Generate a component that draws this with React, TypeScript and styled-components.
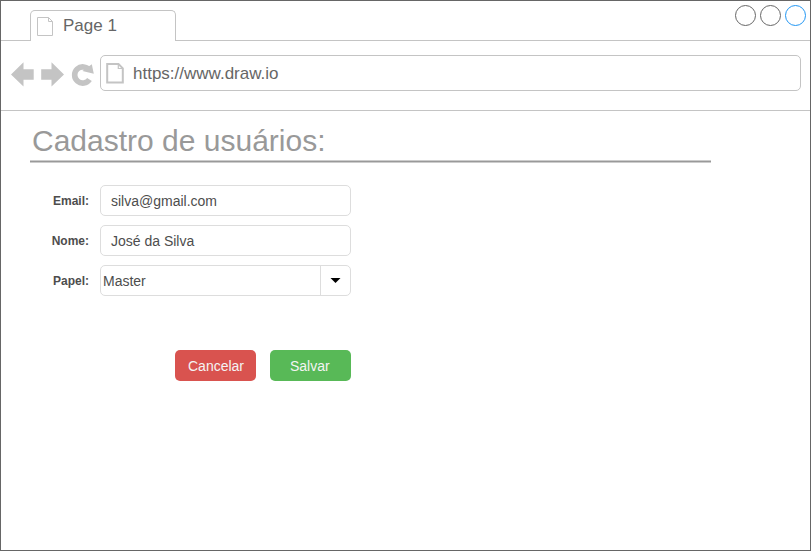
import React from "react";
import styled, { createGlobalStyle } from "styled-components";

const GlobalStyle = createGlobalStyle`
  *, *::before, *::after { box-sizing: border-box; }
  body {
    margin: 0;
    background: #fff;
    font-family: "Liberation Sans", Arial, Helvetica, sans-serif;
  }
`;

const BrowserWindow = styled.div`
  width: 811px;
  height: 551px;
  border: 1px solid #666;
  background: #fff;
  overflow: hidden;
`;

const TabStrip = styled.header`
  display: grid;
  grid-template-columns: 30px 146px 1fr;
  height: 40px;
  margin: 0 -1px;
`;

const StripFill = styled.div`
  display: flex;
  justify-content: flex-end;
  align-items: flex-start;
  gap: 4px;
  padding: 4px 5px 0 0;
  border-bottom: 1px solid #c4c4c4;
`;

const Tab = styled.div`
  display: flex;
  align-items: center;
  gap: 9px;
  margin-top: 9px;
  padding: 0 0 1px 6px;
  border: 1px solid #c4c4c4;
  border-bottom: 0;
  border-radius: 5px 5px 0 0;
  color: #666;
  font-size: 17px;
  line-height: 20px;
`;

const Drawing = styled.svg`
  display: block;
  flex: none;
`;

const TabIcon = styled(Drawing)`
  margin-top: 2px;
`;

const Toolbar = styled.nav`
  display: flex;
  align-items: flex-start;
  height: 70px;
  margin: 0 -1px;
  padding: 14px 10px 0 10px;
  border-bottom: 1px solid #c4c4c4;
`;

const NavIcons = styled.div`
  width: 90px;
  padding-top: 5px;
`;

const AddressBar = styled.div`
  display: flex;
  align-items: center;
  gap: 8px;
  flex: 1;
  height: 36px;
  padding-left: 5px;
  border: 1px solid #c4c4c4;
  border-radius: 5px;
`;

const Address = styled.span`
  padding-top: 2px;
  color: #666;
  font-size: 17px;
  line-height: 20px;
`;

const Content = styled.main`
  padding: 10px 0 0 29px;
`;

const Title = styled.h1`
  width: 681px;
  height: 39px;
  margin: 0;
  padding-left: 2px;
  color: #999;
  font-size: 30px;
  font-weight: 400;
  line-height: 40px;
`;

const Rule = styled.div`
  width: 681px;
  height: 3px;
  background: #999;
  border: solid #ccc;
  border-width: 1px 0;
`;

const Form = styled.form`
  display: grid;
  row-gap: 9px;
  margin-top: 22px;
`;

const FieldRow = styled.label`
  display: grid;
  grid-template-columns: 59px 251px;
  column-gap: 11px;
  align-items: center;
  height: 31px;
`;

const Caption = styled.span`
  color: #4d4d4d;
  font-size: 12px;
  font-weight: 700;
  text-align: right;
`;

const Field = styled.span<{ $inset: number }>`
  display: flex;
  justify-content: space-between;
  align-items: center;
  height: 31px;
  padding-left: ${(p) => p.$inset}px;
  border: 1px solid #ddd;
  border-radius: 5px;
  color: #4d4d4d;
  font-size: 14px;
  line-height: 16px;
`;

const DropButton = styled.span`
  display: flex;
  align-items: center;
  justify-content: center;
  width: 30px;
  height: 29px;
  border-left: 1px solid #ddd;
`;

const Actions = styled.div`
  display: flex;
  gap: 14px;
  margin: 45px 0 0 145px;
`;

const Button = styled.button<{ $color: string; $inset: number }>`
  width: 81px;
  height: 31px;
  padding: 2px 0 0 ${(p) => p.$inset}px;
  border: 0;
  border-radius: 5px;
  background: ${(p) => p.$color};
  color: #f4f4f4;
  text-align: left;
  font: 14px/29px "Liberation Sans", Arial, sans-serif;
`;

const WindowDot = ({ color }: { color: string }) => (
  <Drawing width="21" height="21" viewBox="0 0 21 21">
    <circle cx="10.5" cy="10.5" r="10" fill="#fff" stroke={color} />
  </Drawing>
);

const TabPageIcon = () => (
  <TabIcon width="17" height="19" viewBox="0 0 17 19" fill="none" stroke="#c4c4c4">
    <path d="M.5 .5H11.5L15.5 4.5V18.5H.5ZM11.5 .5V4.5H15.5" />
  </TabIcon>
);

const AddressPageIcon = () => (
  <Drawing width="19" height="22" viewBox="0 0 19 22" fill="none" stroke="#c4c4c4">
    <path strokeWidth="2" d="M1.2 2H12.5L16.8 6.3V20.4H1.2Z" />
    <path strokeWidth="1.2" d="M12.3 2V6.5H17" />
  </Drawing>
);

const Navigation = () => (
  <Drawing width="86" height="28" viewBox="10 60 86 28" fill="#c4c4c4">
    <path d="M11 74.5L23.5 62.2V69.3H33.7V79.7H23.5V86.5Z" />
    <path d="M64 74.5L51.5 62.2V69.3H41.2V79.7H51.5V86.5Z" />
    <path
      d="M89.5 79.5A8.1 8.1 0 1 1 89.3 70.2"
      fill="none"
      stroke="#c4c4c4"
      strokeWidth="5.6"
    />
    <path d="M91.8 64.2L93.8 73.8L82.4 71.1Z" />
  </Drawing>
);

export default function App() {
  return (
    <>
      <GlobalStyle />
      <BrowserWindow>
        <TabStrip>
          <StripFill />
          <Tab>
            <TabPageIcon />
            Page 1
          </Tab>
          <StripFill>
            <WindowDot color="#666" />
            <WindowDot color="#666" />
            <WindowDot color="#2196f3" />
          </StripFill>
        </TabStrip>
        <Toolbar>
          <NavIcons>
            <Navigation />
          </NavIcons>
          <AddressBar>
            <AddressPageIcon />
            <Address>https://www.draw.io</Address>
          </AddressBar>
        </Toolbar>
        <Content>
          <Title>Cadastro de usuários:</Title>
          <Rule />
          <Form onSubmit={(event) => event.preventDefault()}>
            <FieldRow>
              <Caption>Email:</Caption>
              <Field $inset={10}>silva@gmail.com</Field>
            </FieldRow>
            <FieldRow>
              <Caption>Nome:</Caption>
              <Field $inset={10}>José da Silva</Field>
            </FieldRow>
            <FieldRow>
              <Caption>Papel:</Caption>
              <Field $inset={2}>
                Master
                <DropButton>
                  <Drawing width="11" height="5" viewBox="0 0 11 5">
                    <path d="M.5 0H10.5L5.5 5Z" />
                  </Drawing>
                </DropButton>
              </Field>
            </FieldRow>
            <Actions>
              <Button type="button" $color="#d9534f" $inset={13}>Cancelar</Button>
              <Button type="submit" $color="#58b957" $inset={20}>Salvar</Button>
            </Actions>
          </Form>
        </Content>
      </BrowserWindow>
    </>
  );
}
